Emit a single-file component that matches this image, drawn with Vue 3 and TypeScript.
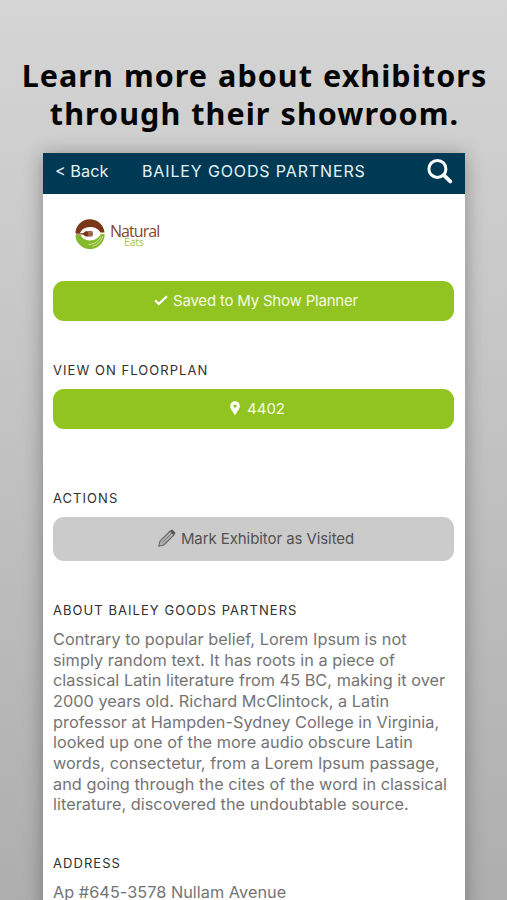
<script setup lang="ts">
const headline: string[] = ['Learn more about exhibitors', 'through their showroom.']
const exhibitor = 'Bailey Goods Partners'
const booth = '4402'
const about: string[] = [
  'Contrary to popular belief, Lorem Ipsum is not',
  'simply random text. It has roots in a piece of',
  'classical Latin literature from 45 BC, making it over',
  '2000 years old. Richard McClintock, a Latin',
  'professor at Hampden-Sydney College in Virginia,',
  'looked up one of the more audio obscure Latin',
  'words, consectetur, from a Lorem Ipsum passage,',
  'and going through the cites of the word in classical',
  'literature, discovered the undoubtable source.',
]
const address = 'Ap #645-3578 Nullam Avenue'
</script>

<template>
  <div class="page">
    <h1 class="headline">
      <span v-for="line in headline" :key="line" class="headline-line">{{ line }}</span>
    </h1>

    <main class="phone">
      <header class="bar">
        <a class="back">&lt; Back</a>
        <span class="title">{{ exhibitor }}</span>
        <svg class="search" viewBox="0 0 26 26" aria-hidden="true">
          <circle cx="10.4" cy="10.9" r="8.5" fill="none" stroke="#fff" stroke-width="3" />
          <path d="M16.8 17.2L23.2 23.4" stroke="#fff" stroke-width="3.8" stroke-linecap="round" />
        </svg>
      </header>

      <div class="content">
        <div class="logo">
          <svg class="logo-mark" viewBox="0 0 30 30" aria-hidden="true">
            <path d="M0.4 14A14.6 14.6 0 0 1 29.5 13.4L25.4 13.4C23.5 9.8 19.5 7.7 15 7.9C10 8 6.6 10.4 5 14Z" fill="#7b3517" />
            <path d="M0.4 16H5.6C7.2 19.5 10.5 21.6 15 21.4C20 21.2 23.8 19 25.6 15.2L29.6 15A14.6 14.6 0 0 1 0.4 16Z" fill="#86b82b" />
            <path d="M25.8 17.5C23.8 22.5 19.5 25 13.5 25.6M27.8 17.2C26 23.4 22 26 17.5 27.3" fill="none" stroke="#eaf3cf" stroke-width=".7" />
            <path d="M1 14.3H7.5C9 14.3 9.4 12.3 11 12.3H16.4Q17.9 12.3 17.9 13.6V16.1Q17.9 17.4 16.4 17.4H11C9.4 17.4 9 15.6 7.5 15.6H1Z" fill="#7b3517" />
            <path d="M13 13.6H18M13 15H18M13 16.3H18" stroke="#d4b9aa" stroke-width=".5" />
          </svg>
          <div class="logo-text">
            <span class="natural">Natural</span>
            <span class="eats">Eats</span>
          </div>
        </div>

        <button class="button saved">
          <svg class="check" viewBox="0 0 14 11" aria-hidden="true">
            <path d="M1.1 5.4L4.9 8.9L12.9 1.2" fill="none" stroke="#fff" stroke-width="2.2" />
          </svg>
          <span>Saved to My Show Planner</span>
        </button>

        <h2 class="label floor-label">View on floorplan</h2>
        <button class="button booth">
          <svg class="pin" viewBox="0 0 10 15" aria-hidden="true">
            <path fill-rule="evenodd" d="M5 .2A4.8 4.8 0 0 0 .2 5C.2 8.3 3.4 11 5 14.6C6.6 11 9.8 8.3 9.8 5A4.8 4.8 0 0 0 5 .2ZM5 3.4A1.7 1.7 0 1 1 5 6.8A1.7 1.7 0 1 1 5 3.4Z" fill="#fff" />
          </svg>
          <span>{{ booth }}</span>
        </button>

        <h2 class="label actions-label">Actions</h2>
        <button class="button visit">
          <svg class="pencil" viewBox="0 0 18 18" aria-hidden="true">
            <path d="M.7 17.3L2 12.2L12.2 2L16 5.8L5.8 16Z" fill="#b0b0b0" stroke="#666" stroke-width="1.1" stroke-linejoin="round" />
            <path d="M4.4 13.6L13.8 4.2" fill="none" stroke="#747474" stroke-width=".9" />
            <path d="M12.2 2L13.4 .8Q14 .2 14.6 .8L17.2 3.4Q17.8 4 17.2 4.6L16 5.8Z" fill="#555" />
          </svg>
          <span>Mark Exhibitor as Visited</span>
        </button>

        <h2 class="label about-label">About {{ exhibitor }}</h2>
        <p class="copy">
          <span v-for="line in about" :key="line" class="copy-line">{{ line }}</span>
        </p>

        <h2 class="label address-label">Address</h2>
        <p class="copy"><span class="copy-line">{{ address }}</span></p>
      </div>
    </main>
  </div>
</template>

<style>
body {
  margin: 0;
}
</style>

<style scoped>
.page {
  box-sizing: border-box;
  width: 507px;
  height: 900px;
  padding-top: 56px;
  overflow: hidden;
  background: linear-gradient(#d5d5d5, #aeaeae);
  font-family: Inter, "Liberation Sans", sans-serif;
}
.headline {
  display: flex;
  flex-direction: column;
  align-items: center;
  height: 97px;
  margin: 0;
  padding-left: 2px;
  color: #050505;
  font: 700 30.5px/38px "Noto Sans", sans-serif;
  white-space: nowrap;
}
.headline-line {
  letter-spacing: 1.05px;
  word-spacing: 1px;
}
.phone {
  width: 422px;
  height: 760px;
  margin: 0 42px 0 43px;
  background: #fff;
  box-shadow: 0 2px 18px rgba(0, 0, 0, 0.32);
}
.bar {
  box-sizing: border-box;
  display: grid;
  grid-template-columns: 87px 1fr 26px;
  align-items: center;
  height: 41px;
  padding: 0 12px;
  background: #003953;
  color: #e4f3fa;
  white-space: nowrap;
}
.back {
  padding-bottom: 5px;
  font-size: 16.3px;
}
.title {
  padding-bottom: 5px;
  font-size: 16px;
  letter-spacing: 0.87px;
  text-transform: uppercase;
}
.search {
  width: 26px;
  height: 26px;
  margin-bottom: 5px;
}
.content {
  padding: 0 11px 0 10px;
}
.logo {
  display: flex;
  height: 62px;
  padding: 25px 0 0 22px;
}
.logo-mark {
  width: 30px;
  height: 30px;
  flex: none;
}
.logo-text {
  display: flex;
  flex-direction: column;
  margin-left: 5px;
  font-family: "Open Sans", sans-serif;
}
.natural {
  height: 17px;
  color: #874529;
  font-size: 16px;
  line-height: 25px;
  letter-spacing: -0.95px;
}
.eats {
  padding-left: 14px;
  color: #9bc648;
  font-size: 10.5px;
  line-height: 13px;
  letter-spacing: -0.2px;
}
.button {
  box-sizing: border-box;
  display: flex;
  align-items: center;
  justify-content: center;
  width: 401px;
  height: 40px;
  padding: 0 0 0 5px;
  border: 0;
  border-radius: 11px;
  background: #92c421;
  color: #f5fbe2;
  font: 400 15px/20px Inter, sans-serif;
  white-space: nowrap;
}
.saved {
  letter-spacing: -0.2px;
}
.booth {
  padding-left: 8px;
}
.check {
  width: 14px;
  height: 11px;
  margin: 0 5px 2px 0;
}
.pin {
  width: 10px;
  height: 15px;
  margin: 0 7px 2px 0;
}
.label {
  margin: 0;
  color: #303030;
  font-size: 13px;
  font-weight: 400;
  line-height: 16px;
  letter-spacing: 1.05px;
  text-transform: uppercase;
  white-space: nowrap;
}
.floor-label {
  margin: 41px 0 11px;
}
.actions-label {
  margin: 61px 0 11px;
}
.visit {
  height: 44px;
  background: #cbcbcb;
  color: #515151;
  letter-spacing: -0.08px;
}
.pencil {
  width: 18px;
  height: 18px;
  margin: 0 5px 2px 0;
}
.about-label {
  margin: 41px 0 11px;
}
.copy {
  display: flex;
  flex-direction: column;
  margin: 0;
  color: #747474;
  font-size: 16.3px;
  line-height: 20.65px;
  letter-spacing: 0.03px;
  white-space: nowrap;
}
.address-label {
  margin: 40px 0 11px;
}
</style>
